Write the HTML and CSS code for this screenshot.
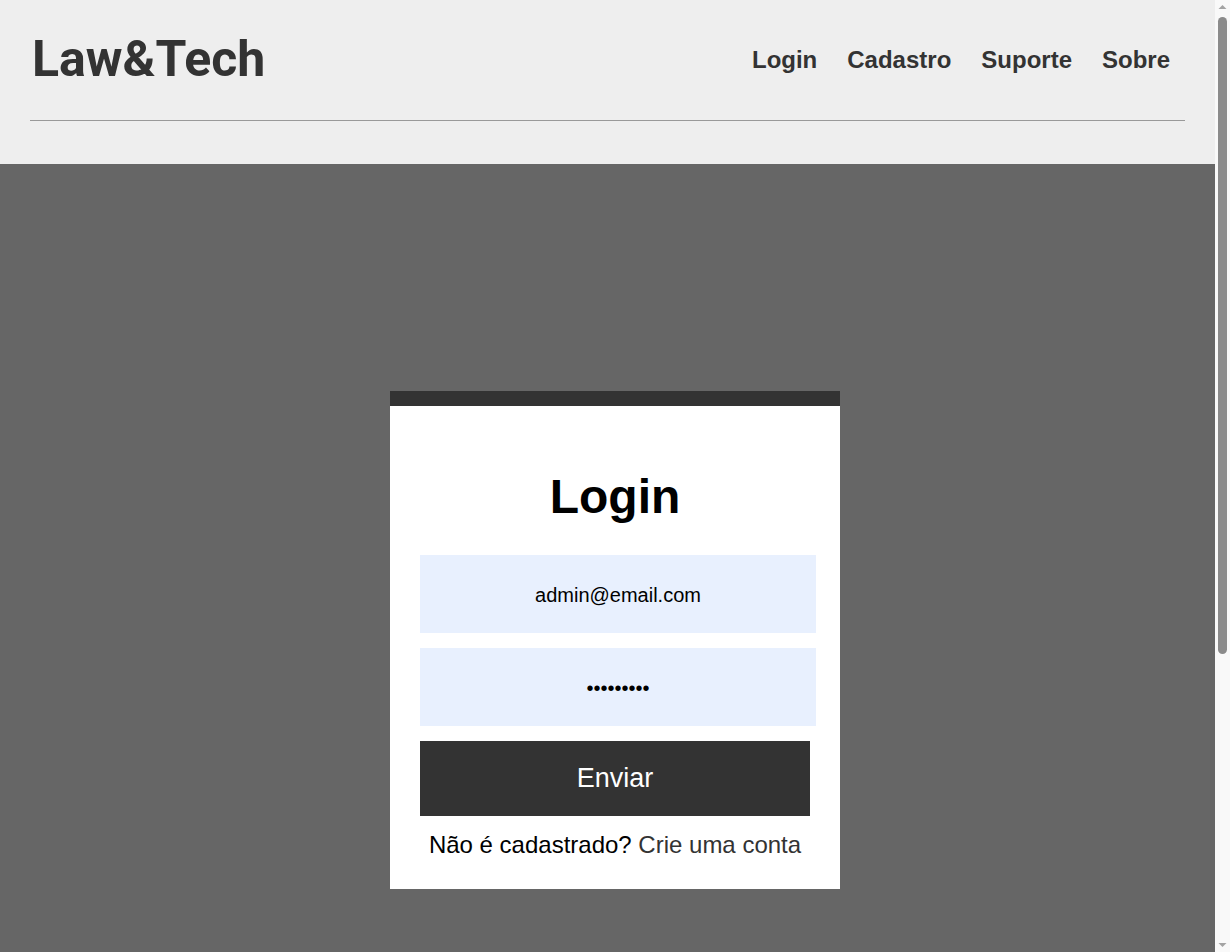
FILE: index.html
```html
<!DOCTYPE html>
<html lang="pt-BR">
<head>
<meta charset="utf-8">
<title>Law&amp;Tech - Login</title>
<link rel="stylesheet" href="styles.css">
</head>
<body>
<header class="site-header">
  <div class="header-bar">
    <h1 class="logo">Law&amp;Tech</h1>
    <nav class="nav">
      <a href="#" class="nav-link">Login</a>
      <a href="#" class="nav-link">Cadastro</a>
      <a href="#" class="nav-link">Suporte</a>
      <a href="#" class="nav-link">Sobre</a>
    </nav>
  </div>
  <hr class="header-rule">
</header>
<main class="main">
  <form class="card" onsubmit="return false">
    <h2 class="card-title">Login</h2>
    <input class="field" type="email" value="admin@email.com">
    <input class="field" type="password" value="123456789">
    <button class="submit" type="submit">Enviar</button>
    <p class="signup">Não é cadastrado? <a href="#" class="signup-link">Crie uma conta</a></p>
  </form>
</main>
<div class="scrollbar" aria-hidden="true">
  <svg class="sb-arrow" width="15" height="15" viewBox="0 0 15 15"><path d="M3.5 9 L7.5 5 L11.5 9 Z" fill="#a3a3a3"/></svg>
  <div class="sb-track"><div class="sb-thumb"></div></div>
  <svg class="sb-arrow" width="15" height="15" viewBox="0 0 15 15"><path d="M3.5 6 L7.5 10 L11.5 6 Z" fill="#a3a3a3"/></svg>
</div>
</body>
</html>
```
FILE: styles.css
```css
html {
  overflow-x: hidden;
}
body {
  margin: 0;
  font-family: "Liberation Sans", Arial, sans-serif;
  background: #666666;
}
.site-header {
  background: #eeeeee;
  padding: 0 30px;
  margin-right: 15px;
  height: 164px;
  box-sizing: border-box;
}
.header-bar {
  display: flex;
  justify-content: space-between;
  align-items: center;
  height: 118px;
  padding-left: 2px;
}
.logo {
  margin: 0;
  padding-bottom: 1px;
  font-family: Roboto, "Liberation Sans", sans-serif;
  font-weight: 700;
  font-size: 50px;
  color: #333333;
  line-height: 1;
}
.nav {
  display: flex;
  padding-top: 2px;
}
.nav-link {
  font-size: 24px;
  font-weight: 700;
  color: #333333;
  text-decoration: none;
  padding: 0 15px;
}
.header-rule {
  margin: 2px 0 0;
  border: 0;
  border-top: 1px solid #999999;
  height: 0;
}
.main {
  width: 100vw;
  display: flex;
  justify-content: center;
  align-items: flex-start;
  padding: 227px 0 466px;
}
.card {
  width: 450px;
  box-sizing: border-box;
  background: #ffffff;
  border-top: 15px solid #333333;
  padding: 30px;
  display: flex;
  flex-direction: column;
  align-items: flex-start;
}
.card-title {
  align-self: stretch;
  text-align: center;
  margin: 33px 0 31px;
  font-size: 48px;
  line-height: 55px;
  font-weight: 700;
  color: #000000;
}
.field {
  width: 396px;
  height: 78px;
  box-sizing: border-box;
  border: 0;
  background: #e8f0fe;
  text-align: center;
  font-family: "Liberation Sans", Arial, sans-serif;
  font-size: 20px;
  color: #000000;
  margin: 0 0 15px;
  padding: 3px 0 0;
  outline: none;
}
.submit {
  width: 390px;
  height: 75px;
  border: 0;
  background: #333333;
  color: #ffffff;
  font-family: "Liberation Sans", Arial, sans-serif;
  font-size: 27px;
  margin: 0;
  padding: 0;
}
.signup {
  align-self: stretch;
  text-align: center;
  margin: 15px 0 0;
  font-size: 24px;
  line-height: 28px;
  color: #000000;
}
.signup-link {
  color: #333333;
  text-decoration: none;
}
.scrollbar {
  position: fixed;
  top: 0;
  right: 0;
  width: 15px;
  height: 100vh;
  background: #f9f9f9;
  display: flex;
  flex-direction: column;
}
.sb-arrow {
  display: block;
  flex: none;
}
.sb-track {
  flex: 1;
  padding-top: 2px;
}
.sb-thumb {
  width: 9px;
  height: 637px;
  margin-left: 3px;
  background: #8b8b8b;
  border-radius: 5px;
}
```
